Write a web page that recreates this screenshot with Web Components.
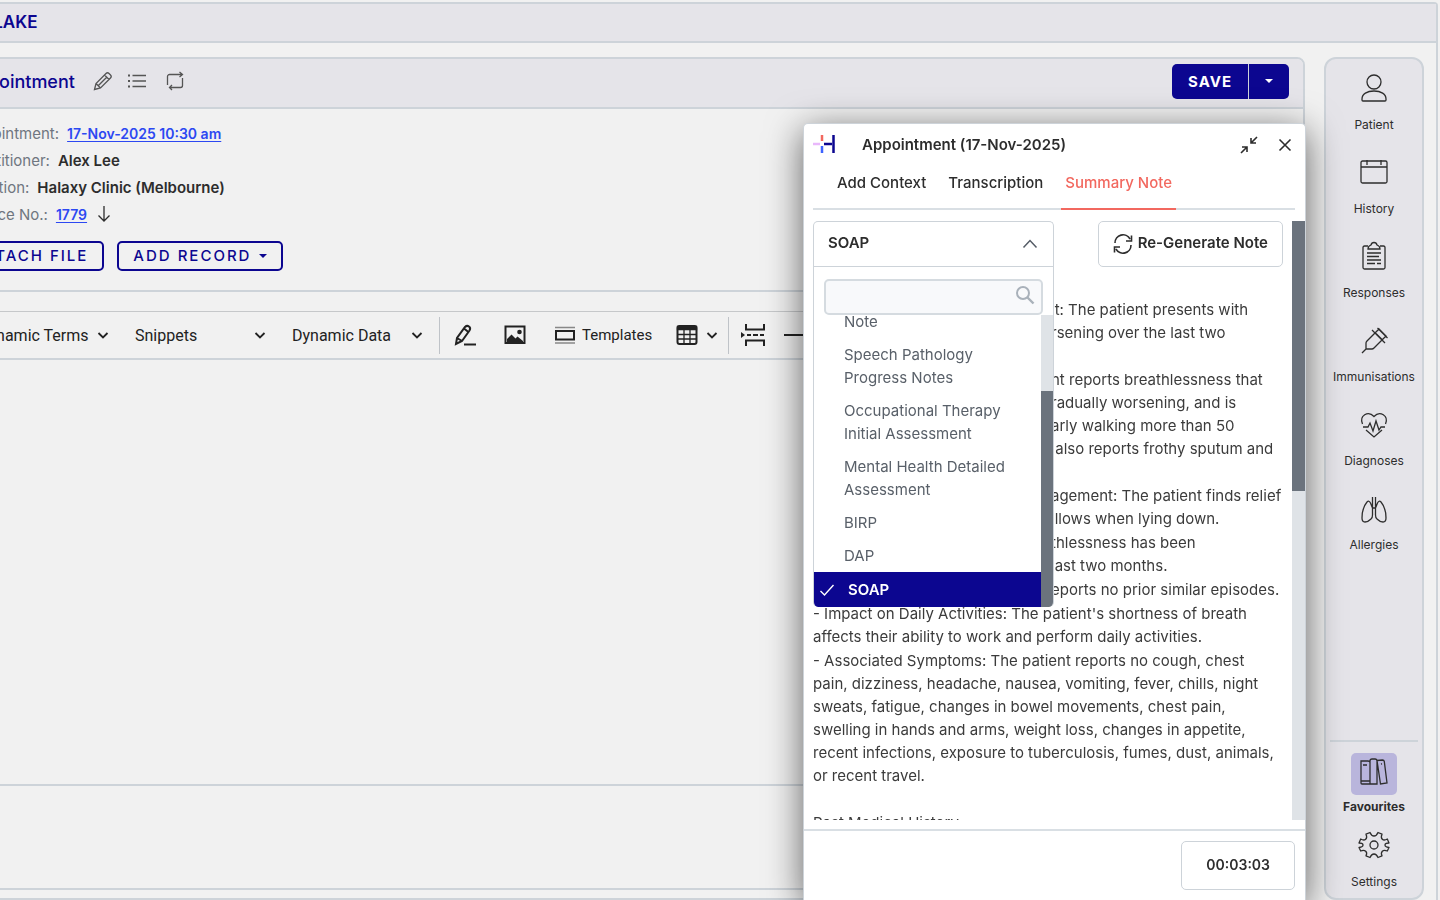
<!DOCTYPE html>
<html lang="en">
<head>
<meta charset="utf-8">
<title>Appointment</title>
<style>
  :root {
    --navy: #0c0690;
    --line: #cdd3d9;
    --surface: #f1f1f1;
    --bar: #e5e4e9;
    --ink: #2d2d2d;
    --muted: #6f7680;
    --link: #2c48f2;
    --accent: #f2685f;
  }

  body {
    margin: 0;
    overflow: hidden;
    background: var(--surface);
    color: var(--ink);
    font: 15px/23px Inter, "Liberation Sans", sans-serif;
  }
</style>
</head>
<body>
<clinic-app>
  <patient-bar slot="bar">BLAKE</patient-bar>
  <record-card slot="main"></record-card>
  <nav-rail slot="rail">
    <nav-item icon="person">Patient</nav-item>
    <nav-item icon="calendar">History</nav-item>
    <nav-item icon="clipboard">Responses</nav-item>
    <nav-item icon="syringe">Immunisations</nav-item>
    <nav-item icon="heart">Diagnoses</nav-item>
    <nav-item icon="lungs">Allergies</nav-item>
    <nav-item slot="bottom" icon="books" current>Favourites</nav-item>
    <nav-item slot="bottom" icon="gear">Settings</nav-item>
  </nav-rail>
</clinic-app>
<scribe-panel heading="Appointment (17-Nov-2025)" time="00:03:03">
  <template-picker></template-picker>
  <clinical-note></clinical-note>
</scribe-panel>

<script>
const RESET = `
  *, *::before { box-sizing: border-box; }
  button, input, select {
    margin: 0;
    padding: 0;
    border: 0;
    background: none;
    color: inherit;
    font: inherit;
  }
  button, a { cursor: pointer; }
`;

// Builds the shadow root once per element from its own template.
class BaseElement extends HTMLElement {
  connectedCallback() {
    if (this.shadowRoot) return;
    const template = document.createElement("template");
    template.innerHTML = `<style>${RESET}${this.styles()}</style>${this.render()}`;
    this.attachShadow({ mode: "open" }).appendChild(template.content.cloneNode(true));
  }

  styles() { return ":host { display: block; }"; }
  render() { return "<slot></slot>"; }
}

// name: [viewBox, markup]
const ICONS = {
  pencil: ["0 0 20 20", `<path d="M1.500 18.500l1.500-6L13 2.500q1.500-1.500 3 0l1.500 1.500q1.500 1.500 0 3L7.500 17zM3 12.500l4.500 4.500M11.500 4l4.500 4.500M5.200 14.800l8.500-8.500"/>`],
  list: ["0 0 20 20", `<path d="M5.500 4.500H19M5.500 10H19M5.500 15.500H19"/><path d="M1 4.500h2M1 10h2M1 15.500h2" stroke-width="2"/>`],
  repeat: ["0 0 20 20", `<path d="M2.500 14V5.500a2 2 0 0 1 2-2h13M14.500 1L17.500 3.500 14.500 6M17.500 7v7.500a2 2 0 0 1-2 2H4.500M7 14l-2.500 2.500L7 19"/>`],
  down: ["0 0 14 20", `<path d="M7 1v15M1.500 10.500L7 16l5.500-5.500"/>`],
  caret: ["0 0 8 6", `<path d="M0 1h8L4 5z" fill="currentColor" stroke="none"/>`],
  chevron: ["0 0 12 12", `<path d="M1.500 4L6 8.500 10.500 4" stroke-width="1.800"/>`],
  up: ["0 0 16 12", `<path d="M1.500 10.500L8 3.500l6.500 7" stroke-width="1.500"/>`],
  highlight: ["0 0 22 22", `<path d="M2 20l1-6L11 3q2-2 4-.5t.5 4L8 17zM3 14l5 3M10 4.500l5 4" stroke-width="2"/><path d="M10 20.500h12" stroke-width="2"/>`],
  image: ["0 0 22 22", `<rect x="1.500" y="2.500" width="19" height="16.500" stroke-width="2"/><path d="M3 18v-3l4.500-4.500 4 4 2-2L19 17v1z" fill="currentColor" stroke="none"/><circle cx="15.500" cy="8" r="2.300" fill="currentColor" stroke="none"/>`],
  template: ["0 0 22 22", `<path d="M1 3.500h20M1 19h20" stroke="#888" stroke-width="1.500"/><rect x="2" y="7" width="18" height="8.500" stroke-width="2"/>`],
  table: ["0 0 22 22", `<rect x="1.500" y="2" width="19" height="18" rx="2" stroke-width="2"/><path d="M1.500 2.500h19v3h-19z" fill="currentColor"/><path d="M2 10.500h18M2 15h18M8 6v14M14 6v14"/>`],
  pagebreak: ["0 0 24 24", `<path d="M5 1v5.500h18V1M5 23v-5.500h18V23" stroke-width="2"/><path d="M6 12h4M12 12h5M19 12h4" stroke-width="2"/><path d="M0 9l4 3-4 3z" fill="currentColor" stroke="none"/>`],
  rule: ["0 0 24 24", `<path d="M1 12h22" stroke-width="2"/>`],
  shrink: ["0 0 18 18", `<path d="M17 1l-6 6M11 2v5h5M1 17l6-6M2 11h5v5" stroke-width="1.600"/>`],
  close: ["0 0 14 14", `<path d="M1.500 1.500l11 11M12.500 1.500l-11 11" stroke-width="1.600"/>`],
  refresh: ["0 0 20 20", `<path d="M2 10a8 8 0 0 1 15-4M18.500 2.500V8H13M18 12a8 8 0 0 1-15 4M1.500 19.500V14H7" stroke-width="1.600"/>`],
  search: ["0 0 20 20", `<circle cx="8" cy="8" r="6" stroke-width="2"/><path d="M12.500 12.500l6 6" stroke-width="2.400"/>`],
  check: ["0 0 16 14", `<path d="M1.500 8l4 4 9-10" stroke-width="1.400"/>`],
  person: ["0 0 30 30", `<circle cx="15" cy="8" r="7"/><path d="M3 26v-1c0-5 5-8 12-8s12 3 12 8v1q0 1-1 1H4q-1 0-1-1z"/>`],
  calendar: ["0 0 30 30", `<rect x="2" y="3" width="26" height="22" rx="1.500"/><path d="M2 9h26M8 2v5M22 2v5"/>`],
  clipboard: ["0 0 30 30", `<path d="M9 4H5.500Q4 4 4 5.500v20Q4 27 5.500 27h19q1.500 0 1.500-1.500v-20Q26 4 24.500 4H21"/><path d="M9 7h12q0-3-3-4-.5-2.500-3-2.500T12 3Q9 4 9 7zM8 11h14M8 14.500h12M8 18h14M8 21.500h8M18 21.500h4"/>`],
  syringe: ["0 0 30 30", `<path d="M3 27l4-4M7 23v-6q0-1 1-2l8-8 7 7-8 8q-1 1-2 1zM13 4l13 13M16 7l4-4 7 7-4 4M18.500 2l10 10M17 7.500l6 6"/>`],
  heart: ["0 0 30 30", `<path d="M3.500 14C0 6 9 0 15 6.500 21 0 30 6 26.500 14M7 20l8 7 8-7"/><path d="M4 17h5l2-4 3 8 3-10 3 9 2-3h4"/>`],
  lungs: ["0 0 30 30", `<path d="M13.500 3v11l-2-5Q10 6 8 8 3 14 3 24q0 4 3 4t6-3q1.500-1 1.500-4v-7M16.500 3v11l2-5q1.500-3 3.500-1 5 6 5 16 0 4-3 4t-6-3q-1.500-1-1.500-4v-7M13.500 14h3"/>`],
  books: ["0 0 30 30", `<path d="M2 4h7q2 0 2 1.500V27H3q-1 0-1-1zM2 24h9M4 8h4M11 4q0-2 2-2h3q2 0 2 2v23h-7zM18 3.500L23.500 3q1.500 0 1.800 1.500L28 26l-6.500 1zM22 7l1-.2"/>`],
  gear: ["0 0 30 30", `<circle cx="15" cy="14" r="4"/><path d="M11 1.500Q12.500 5 15 5t4-3.500l4 1.700q-1.500 3.300.3 5t5-.2L30 12q-4 0-4 2t4 2.500L28.300 20q-3.300-1.500-5 .3t-.3 4.500L19 26.500Q17.500 23 15 23t-4 3.500l-4-1.700q1.500-2.800-.3-4.500t-5-.3L0 16.500Q4 16 4 14t-4-2l1.700-4q3.200 1.900 5 .2T7 3.200z" stroke-linejoin="round"/>`],
};

class UiIcon extends BaseElement {
  styles() {
    return `
      :host { display: inline-flex; flex: none; }
      svg { display: block; fill: none; stroke: currentColor; overflow: visible; }
    `;
  }

  render() {
    const [viewBox, markup] = ICONS[this.getAttribute("name")];
    const [, , width, height] = viewBox.split(" ");
    const size = Number(this.getAttribute("size")) || Number(width);
    return `<svg viewBox="${viewBox}" width="${size}" height="${Math.round(size * height / width)}" stroke-width="1.300" aria-hidden="true">${markup}</svg>`;
  }
}

class BrandMark extends BaseElement {
  styles() { return ":host { display: flex; width: 22px; } svg { display: block; }"; }

  render() {
    return `
      <svg viewBox="0 0 22 20" width="22" height="20" role="img" aria-label="Halaxy">
        <path d="M9 0v6" stroke="#f2685f" stroke-width="2.500"/>
        <path d="M0 9h7" stroke="#e9b8fb" stroke-width="2.500"/>
        <path d="M9 11v7" stroke="#3d63ff" stroke-width="2.500"/>
        <path d="M11 9h8M20.500 0v18" stroke="#0c0690" stroke-width="2.500"/>
      </svg>`;
  }
}

class ClinicApp extends BaseElement {
  styles() {
    return `
      :host { display: block; height: 100vh; padding: 2px 2px 0 0; overflow: hidden; }
      /* the record is scrolled a little to the right */
      .frame {
        display: flex;
        flex-direction: column;
        height: 100%;
        margin-left: -60px;
        border: 2px solid var(--line);
        border-bottom: 0;
        border-radius: 4px 4px 0 0;
      }
      .body {
        display: grid;
        grid-template-columns: minmax(0, 1fr) 100px;
        gap: 19px;
        flex: 1;
        min-height: 0;
        padding: 14px 12px 2px;
      }
    `;
  }

  render() {
    return `
      <div class="frame">
        <slot name="bar"></slot>
        <div class="body">
          <slot name="main"></slot>
          <slot name="rail"></slot>
        </div>
      </div>`;
  }
}

class PatientBar extends BaseElement {
  styles() {
    return `
      :host {
        display: block;
        padding: 7px 40px;
        background: var(--bar);
        border-bottom: 2px solid var(--line);
        color: var(--navy);
        font-size: 17px;
        font-weight: 600;
      }
    `;
  }
}

class RecordCard extends BaseElement {
  styles() {
    return `
      :host {
        display: flex;
        flex-direction: column;
        min-height: 0;
        border: 2px solid var(--line);
        border-radius: 8px;
        overflow: hidden;
      }
      header {
        display: flex;
        align-items: center;
        height: 50px;
        padding: 0 14px 4px 8px;
        background: var(--bar);
        border-bottom: 2px solid var(--line);
      }
      h1 { margin: 0; color: var(--navy); font-size: 18px; font-weight: 500; }
      .tools { display: flex; gap: 14px; margin-left: 18px; color: #555; }
      .tools button { display: flex; }
      .save { display: flex; gap: 1px; height: 35px; margin-left: auto; border-radius: 5px; overflow: hidden; background: var(--line); }
      .save button { display: flex; align-items: center; background: var(--navy); color: #fff; padding: 0 16px; font-weight: 700; letter-spacing: 1px; }
      dl { margin: 0; padding: 11px 8px 0; line-height: 27px; }
      dl div { display: flex; gap: 8px; align-items: center; }
      dt { color: var(--muted); }
      dd { display: flex; gap: 10px; align-items: center; margin: 0; font-weight: 600; }
      a { color: var(--link); font-size: 14px; text-underline-offset: 2px; }
      .actions { display: flex; gap: 13px; padding: 13px 0 19px; border-bottom: 2px solid var(--line); }
      .actions button {
        display: flex;
        align-items: center;
        gap: 8px;
        height: 30px;
        padding: 0 14px 1px;
        border: 2px solid var(--navy);
        border-radius: 5px;
        color: var(--navy);
        font-weight: 500;
        letter-spacing: 2px;
      }
      .editor { flex: 1; border: 0; border-bottom: 2px solid var(--line); }
      .extra { height: 104px; margin-bottom: 8px; border-bottom: 2px solid var(--line); }
    `;
  }

  render() {
    return `
      <header>
        <h1>Appointment</h1>
        <div class="tools">
          <button aria-label="Edit"><ui-icon name="pencil"></ui-icon></button>
          <button aria-label="List"><ui-icon name="list"></ui-icon></button>
        </div>
        <div class="tools">
          <button aria-label="Repeat"><ui-icon name="repeat"></ui-icon></button>
        </div>
        <div class="save">
          <button>SAVE</button>
          <button aria-label="More save options"><ui-icon name="caret"></ui-icon></button>
        </div>
      </header>
      <dl>
        <div><dt>Appointment:</dt><dd><a href="#appointment">17-Nov-2025 10:30 am</a></dd></div>
        <div><dt>Practitioner:</dt><dd>Alex Lee</dd></div>
        <div><dt>Location:</dt><dd>Halaxy Clinic (Melbourne)</dd></div>
        <div><dt>Invoice No.:</dt><dd><a href="#invoice">1779</a><ui-icon name="down"></ui-icon></dd></div>
      </dl>
      <div class="actions">
        <button>ATTACH FILE</button>
        <button>ADD RECORD <ui-icon name="caret"></ui-icon></button>
      </div>
      <editor-toolbar></editor-toolbar>
      <div class="editor" contenteditable="true" role="textbox" aria-label="Clinical note"></div>
      <div class="extra"></div>`;
  }
}

class EditorToolbar extends BaseElement {
  styles() {
    return `
      :host {
        display: flex;
        align-items: center;
        height: 49px;
        margin-top: 19px;
        padding-left: 22px;
        border-top: 1px solid #c6c8ca;
        border-bottom: 2px solid var(--line);
        font: 16px/23px Roboto, "Liberation Sans", sans-serif;
        color: #222;
        overflow: hidden;
      }
      .menus { display: flex; gap: 10px; }
      label { display: grid; grid-template-columns: 147px; align-items: center; }
      select, label ui-icon { grid-area: 1 / 1; }
      select { appearance: none; outline: 0; }
      label ui-icon { justify-self: end; margin-right: 16px; pointer-events: none; }
      hr { flex: none; width: 1px; height: 37px; margin: 0; border: 0; background: #bfc3c8; }
      button { display: flex; flex: none; align-items: center; gap: 6px; padding: 0 14px; font-size: 15px; }
      .table { gap: 8px; padding: 0 10px; }
      .break { padding: 0 6px 0 12px; }
    `;
  }

  menu(text) {
    return `<label><select aria-label="${text}"><option>${text}</option></select><ui-icon name="chevron"></ui-icon></label>`;
  }

  render() {
    return `
      <div class="menus">${["Dynamic Terms", "Snippets", "Dynamic Data"].map(this.menu).join("")}</div>
      <hr>
      <button aria-label="Highlight"><ui-icon name="highlight"></ui-icon></button>
      <button aria-label="Insert image"><ui-icon name="image"></ui-icon></button>
      <button><ui-icon name="template"></ui-icon>Templates</button>
      <button class="table" aria-label="Insert table"><ui-icon name="table"></ui-icon><ui-icon name="chevron"></ui-icon></button>
      <hr>
      <button class="break" aria-label="Page break"><ui-icon name="pagebreak"></ui-icon></button>
      <button class="break" aria-label="Horizontal line"><ui-icon name="rule"></ui-icon></button>`;
  }
}

class NavRail extends BaseElement {
  styles() {
    return `
      :host {
        display: flex;
        flex-direction: column;
        justify-content: space-between;
        padding: 15px 4px 8px;
        background: var(--bar);
        border: 2px solid var(--line);
        border-radius: 12px;
      }
      nav { display: flex; flex-direction: column; gap: 25px; }
      .bottom { gap: 16px; padding-top: 11px; border-top: 2px solid var(--line); }
    `;
  }

  render() {
    return `
      <nav aria-label="Record"><slot></slot></nav>
      <nav class="bottom" aria-label="Tools"><slot name="bottom"></slot></nav>`;
  }
}

class NavItem extends BaseElement {
  styles() {
    return `
      :host { display: block; }
      a {
        display: flex;
        flex-direction: column;
        align-items: center;
        gap: 13px;
        color: var(--ink);
        font-size: 12px;
        line-height: 16px;
        text-decoration: none;
      }
      :host([current]) a { gap: 4px; font-weight: 700; }
      :host([current]) ui-icon { padding: 4px 8px 8px; background: #b9b5dc; border-radius: 5px; }
    `;
  }

  render() {
    const icon = this.getAttribute("icon");
    return `<a href="#${icon}"><ui-icon name="${icon}" size="30"></ui-icon><span><slot></slot></span></a>`;
  }
}

class ScribePanel extends BaseElement {
  styles() {
    return `
      :host {
        position: fixed;
        top: 123px;
        right: 134px;
        bottom: 0;
        width: 501px;
        display: flex;
        flex-direction: column;
        background: #fff;
        border: 1px solid var(--line);
        border-bottom: 0;
        border-radius: 5px 5px 0 0;
        box-shadow: 0 8px 36px rgba(0, 0, 0, .6);
      }
      header { display: flex; align-items: center; height: 41px; padding: 0 13px 0 9px; }
      h2 { margin: 0 auto 0 27px; font-size: 15px; font-weight: 600; }
      header button { display: flex; margin-left: 20px; }
      .tabs { display: flex; gap: 14px; height: 45px; margin: 0 10px 0 9px; padding-left: 20px; border-bottom: 2px solid #d9dfe4; }
      .tabs button { height: 45px; padding: 0 4px 10px; font-weight: 500; }
      .tabs [aria-selected="true"] { border-bottom: 2px solid var(--accent); padding-bottom: 8px; color: var(--accent); }
      .body { display: flex; flex: 1; min-height: 0; margin: 11px 0 9px; padding-left: 9px; }
      .content { position: relative; flex: 1; overflow: hidden; padding-right: 9px; }
      .row { display: flex; justify-content: flex-end; padding-bottom: 31px; }
      .row button {
        display: flex;
        align-items: center;
        gap: 5px;
        height: 46px;
        padding: 0 14px 3px;
        border: 1px solid var(--line);
        border-radius: 5px;
        font-weight: 600;
      }
      .bar { flex: none; width: 13px; background: #dfe3e7; }
      .bar::before { content: ""; display: block; height: 45%; background: #6b737d; }
      footer { display: flex; justify-content: flex-end; padding: 10px 10px; border-top: 2px solid #d9dfe4; }
      footer button { height: 49px; padding: 0 24px 3px; border: 1px solid var(--line); border-radius: 5px; font-size: 14px; font-weight: 600; }
    `;
  }

  render() {
    return `
      <header>
        <brand-mark></brand-mark>
        <h2>${this.getAttribute("heading")}</h2>
        <button aria-label="Minimise"><ui-icon name="shrink"></ui-icon></button>
        <button aria-label="Close"><ui-icon name="close"></ui-icon></button>
      </header>
      <div class="tabs" role="tablist">
        <button role="tab">Add Context</button>
        <button role="tab">Transcription</button>
        <button role="tab" aria-selected="true">Summary Note</button>
      </div>
      <div class="body">
        <div class="content">
          <div class="row"><button><ui-icon name="refresh"></ui-icon>Re-Generate Note</button></div>
          <slot></slot>
        </div>
        <div class="bar"></div>
      </div>
      <footer><button>${this.getAttribute("time")}</button></footer>`;
  }
}

class TemplatePicker extends BaseElement {
  styles() {
    return `
      /* open menu, lies over the note */
      :host {
        position: absolute;
        z-index: 1;
        top: 0;
        left: 0;
        width: 239px;
        background: #fff;
        border: 1px solid var(--line);
        border-bottom: 0;
        border-radius: 5px;
        overflow: hidden;
      }
      .toggle {
        display: flex;
        align-items: center;
        justify-content: space-between;
        width: 100%;
        height: 45px;
        padding: 0 15px 3px 14px;
        border-bottom: 1px solid var(--line);
        font-weight: 600;
      }
      .toggle ui-icon { color: #555c66; }
      label { display: grid; align-items: center; margin: 12px 10px 0; color: #a9b1ba; }
      input, label ui-icon { grid-area: 1 / 1; }
      input { width: 100%; height: 36px; padding: 0 36px 0 10px; background: #f8f9fb; border: 2px solid #d5dbe0; border-radius: 5px; outline: 0; }
      label ui-icon { justify-self: end; margin: 0 8px 4px 0; }
      .list { display: flex; height: 292px; }
      ul { display: flex; flex: 1; flex-direction: column; justify-content: flex-end; margin: 0; padding: 0; overflow: hidden; list-style: none; color: #596069; }
      li { flex: none; padding: 5px 30px; }
      [aria-selected="true"] { display: flex; align-items: center; gap: 13px; height: 35px; padding: 0 5px; background: var(--navy); color: #fff; font-weight: 600; }
      .bar { display: flex; flex-direction: column; justify-content: flex-end; width: 12px; background: #dfe3e7; }
      .bar::before { content: ""; height: 74%; background: #6b737d; }
    `;
  }

  render() {
    return `
      <button class="toggle" aria-expanded="true">SOAP<ui-icon name="up"></ui-icon></button>
      <label><input type="text" aria-label="Search templates"><ui-icon name="search"></ui-icon></label>
      <div class="list">
        <ul role="listbox">
          <li role="option">Note</li>
          <li role="option">Speech Pathology<br>Progress Notes</li>
          <li role="option">Occupational Therapy<br>Initial Assessment</li>
          <li role="option">Mental Health Detailed<br>Assessment</li>
          <li role="option">BIRP</li>
          <li role="option">DAP</li>
          <li role="option" aria-selected="true"><ui-icon name="check"></ui-icon>SOAP</li>
        </ul>
        <div class="bar"></div>
      </div>`;
  }
}

// Each paragraph is a list of lines; a line that starts with "|" comes out from under the open menu.
const NOTE = [
  ["|it: The patient presents with", "|rsening over the last two", ""],
  ["|nt reports breathlessness that", "|radually worsening, and is", "|arly walking more than 50", "| also reports frothy sputum and", ""],
  ["|agement: The patient finds relief", "|illows when lying down."],
  ["|thlessness has been", "|last two months."],
  ["|eports no prior similar episodes."],
  ["- Impact on Daily Activities: The patient's shortness of breath", "affects their ability to work and perform daily activities."],
  [
    "- Associated Symptoms: The patient reports no cough, chest",
    "pain, dizziness, headache, nausea, vomiting, fever, chills, night",
    "sweats, fatigue, changes in bowel movements, chest pain,",
    "swelling in hands and arms, weight loss, changes in appetite,",
    "recent infections, exposure to tuberculosis, fumes, dust, animals,",
    "or recent travel.",
    "",
  ],
  ["Past Medical History"],
];

class ClinicalNote extends BaseElement {
  styles() {
    return `
      :host { display: flex; flex-direction: column; gap: 1px; color: #3b3b3b; }
      p { margin: 0; white-space: pre; }
      span { display: block; min-height: 23px; }
      .under { padding-left: 238px; }
    `;
  }

  line(text) {
    return text.startsWith("|") ? `<span class="under">${text.slice(1)}</span>` : `<span>${text}</span>`;
  }

  render() {
    return NOTE.map((lines) => `<p>${lines.map(this.line).join("")}</p>`).join("");
  }
}

customElements.define("ui-icon", UiIcon);
customElements.define("brand-mark", BrandMark);
customElements.define("clinic-app", ClinicApp);
customElements.define("patient-bar", PatientBar);
customElements.define("record-card", RecordCard);
customElements.define("editor-toolbar", EditorToolbar);
customElements.define("nav-rail", NavRail);
customElements.define("nav-item", NavItem);
customElements.define("scribe-panel", ScribePanel);
customElements.define("template-picker", TemplatePicker);
customElements.define("clinical-note", ClinicalNote);
</script>
</body>
</html>
